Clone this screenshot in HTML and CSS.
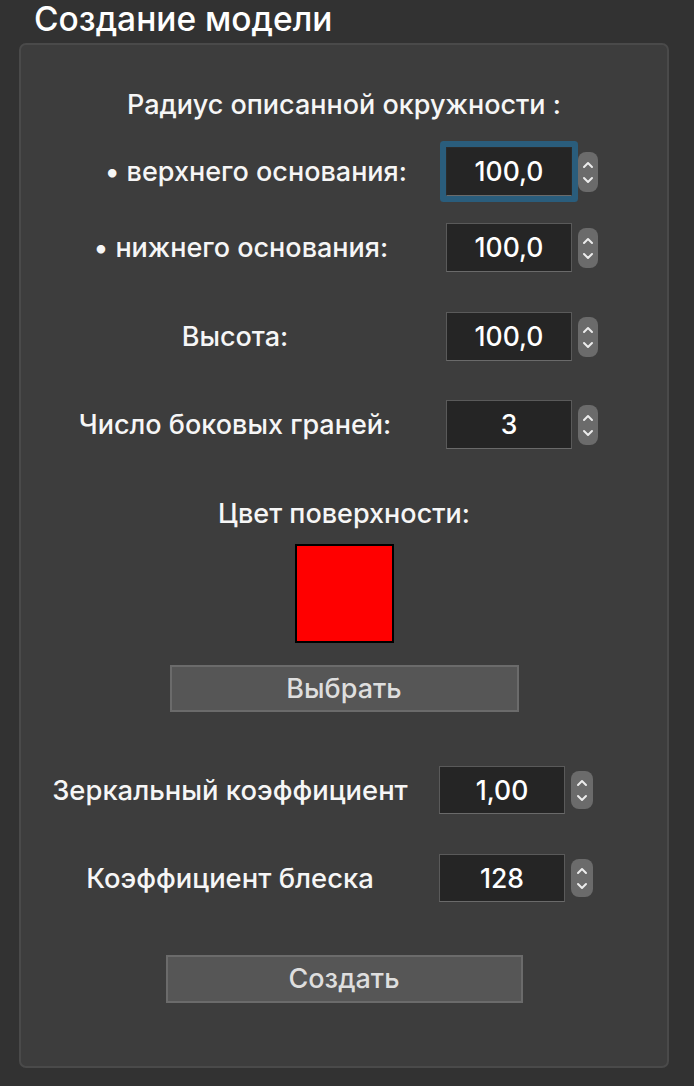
FILE: index.html
```html
<!DOCTYPE html>
<html lang="ru">
<head>
<meta charset="utf-8">
<title>Создание модели</title>
<link rel="stylesheet" href="styles.css">
</head>
<body>
<h1 class="title">Создание модели</h1>
<section class="panel">
  <p class="heading">Радиус описанной окружности :</p>

  <div class="row row-first">
    <span class="label label-shift">• верхнего основания:</span>
    <span class="field field-focus">100,0</span>
    <svg class="spin" viewBox="0 0 20 40" width="20" height="40"><rect x="0" y="0" width="20" height="40" rx="8"/><path d="M6 15 L10 11 L14 15 M6 26 L10 30 L14 26"/></svg>
  </div>

  <div class="row row-second">
    <span class="label label-shift-small">• нижнего основания:</span>
    <span class="field">100,0</span>
    <svg class="spin" viewBox="0 0 20 40" width="20" height="40"><rect x="0" y="0" width="20" height="40" rx="8"/><path d="M6 15 L10 11 L14 15 M6 26 L10 30 L14 26"/></svg>
  </div>

  <div class="row row-third">
    <span class="label">Высота:</span>
    <span class="field">100,0</span>
    <svg class="spin" viewBox="0 0 20 40" width="20" height="40"><rect x="0" y="0" width="20" height="40" rx="8"/><path d="M6 15 L10 11 L14 15 M6 26 L10 30 L14 26"/></svg>
  </div>

  <div class="row row-fourth">
    <span class="label">Число боковых граней:</span>
    <span class="field">3</span>
    <svg class="spin" viewBox="0 0 20 40" width="20" height="40"><rect x="0" y="0" width="20" height="40" rx="8"/><path d="M6 15 L10 11 L14 15 M6 26 L10 30 L14 26"/></svg>
  </div>

  <p class="subheading">Цвет поверхности:</p>
  <div class="swatch"></div>
  <button class="btn btn-choose" type="button">Выбрать</button>

  <div class="row row-lower row-fifth">
    <span class="label">Зеркальный коэффициент</span>
    <span class="field">1,00</span>
    <svg class="spin" viewBox="0 0 22 38" width="22" height="38"><rect x="0" y="0" width="22" height="38" rx="8"/><path d="M7 14 L11 10 L15 14 M7 25 L11 29 L15 25"/></svg>
  </div>

  <div class="row row-lower row-sixth">
    <span class="label">Коэффициент блеска</span>
    <span class="field">128</span>
    <svg class="spin" viewBox="0 0 22 38" width="22" height="38"><rect x="0" y="0" width="22" height="38" rx="8"/><path d="M7 14 L11 10 L15 14 M7 25 L11 29 L15 25"/></svg>
  </div>

  <button class="btn btn-create" type="button">Создать</button>
</section>
</body>
</html>
```

FILE: styles.css
```css
html, body {
  margin: 0;
  padding: 0;
  background: #323232;
}

body {
  width: 694px;
  height: 1086px;
  overflow: hidden;
  font-family: Inter, "Liberation Sans", Arial, sans-serif;
  font-weight: 450;
  color: #f6f6f6;
}

.title {
  margin: 0;
  padding: 0 0 5px 34px;
  font-size: 33.5px;
  line-height: 38px;
  font-weight: 450;
  color: #ffffff;
}

.panel {
  box-sizing: border-box;
  margin: 0 25px 0 19px;
  height: 1025px;
  border: 2px solid #4a4a4a;
  border-radius: 7px;
  background: #3d3d3d;
  display: flex;
  flex-direction: column;
}

.heading,
.subheading {
  margin: 0;
  font-size: 27px;
  line-height: 34px;
  text-align: center;
}

.heading {
  margin-top: 43px;
}

.row {
  display: flex;
  align-items: center;
  height: 49px;
  padding-left: 21px;
}

.label {
  box-sizing: border-box;
  flex: 0 0 386px;
  text-align: center;
  font-size: 27px;
  line-height: 34px;
  white-space: nowrap;
}

.label-shift {
  padding-left: 42px;
}

.label-shift-small {
  padding-left: 12px;
}

.field {
  box-sizing: border-box;
  flex: 0 0 126px;
  height: 49px;
  margin-left: 18px;
  background: #252525;
  border: 1px solid #5a5a5a;
  border-bottom-color: #6a6a6a;
  font-size: 26.5px;
  line-height: 47px;
  text-align: center;
  color: #ffffff;
}

.field-focus {
  border-radius: 1px;
  border-color: #2b2b2b;
  border-bottom-color: #6a6a6a;
  box-shadow: 0 0 0 6px #2a5d7c;
}

.spin {
  flex: 0 0 auto;
  margin-left: 6px;
  display: block;
}

.spin rect {
  fill: #6b6b6b;
}

.spin path {
  fill: none;
  stroke: #ececec;
  stroke-width: 2;
  stroke-linecap: round;
  stroke-linejoin: round;
}

.row-first { margin-top: 25px; }
.row-second { margin-top: 27px; }
.row-third { margin-top: 40px; }
.row-fourth { margin-top: 39px; }

.subheading {
  margin-top: 48px;
}

.swatch {
  box-sizing: border-box;
  width: 99px;
  height: 99px;
  margin: 13px auto 0;
  background: #ff0000;
  border: 2px solid #000000;
}

.btn {
  box-sizing: border-box;
  display: block;
  margin-left: auto;
  margin-right: auto;
  padding: 0;
  background: #565656;
  border: 2px solid #6b6b6b;
  border-radius: 0;
  color: #dedede;
  font-family: Inter, "Liberation Sans", Arial, sans-serif;
  font-weight: 450;
  font-size: 27px;
  line-height: 30px;
}

.btn-choose {
  width: 349px;
  height: 47px;
  margin-top: 22px;
}

.row-lower {
  height: 48px;
}

.row-lower .label {
  flex-basis: 376px;
  font-size: 27.4px;
}

.row-lower .field {
  height: 48px;
  line-height: 46px;
  margin-left: 21px;
}

.row-fifth { margin-top: 54px; }
.row-sixth { margin-top: 40px; }

.btn-create {
  width: 357px;
  height: 48px;
  margin-top: 53px;
}
```
